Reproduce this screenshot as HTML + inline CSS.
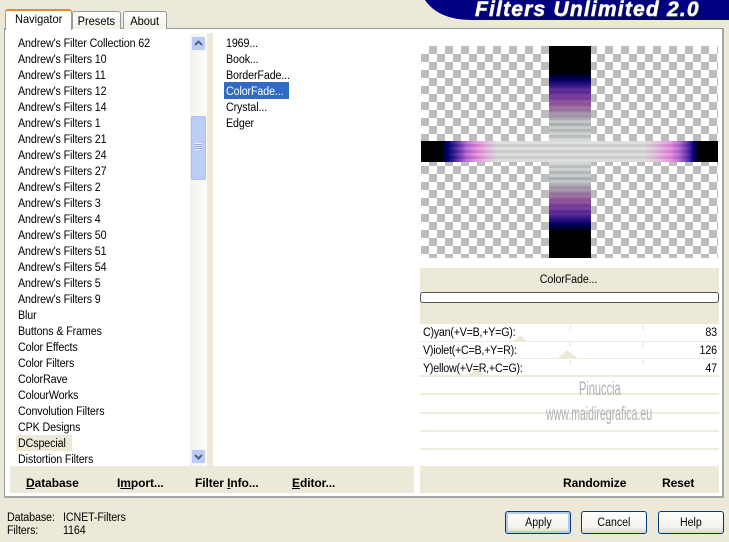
<!DOCTYPE html>
<html><head><meta charset="utf-8"><style>
html,body{margin:0;padding:0}
body{width:729px;height:542px;background:#ece9d8;overflow:hidden;position:relative;font-family:"Liberation Sans",sans-serif;font-size:12px;color:#000}
.a{position:absolute}
.t{position:absolute;white-space:nowrap;line-height:16px;font-size:11.5px;letter-spacing:-.12px;transform:scaleX(.93);transform-origin:0 0}
.b{font-weight:bold;font-size:12px;letter-spacing:-.08px;transform:none}
.c{transform-origin:50% 0}
.r{transform-origin:100% 0}
.btn{position:absolute;top:511px;width:66px;height:23px;box-sizing:border-box;border:1px solid #003c74;border-radius:3px;background:linear-gradient(#fff,#f4f3ee 70%,#dcd8c8);text-align:center;line-height:22px;font-size:11.5px}
.btn span,.tab span{display:inline-block;transform:scaleX(.92)}
.tab{position:absolute;box-sizing:border-box;border:1px solid #919b9c;border-bottom:0;border-radius:3px 3px 0 0;background:linear-gradient(#fff,#f3f1e6);text-align:center;font-size:12px}
.line{position:absolute;left:420px;width:299px;height:2px;background:#efebdd}
</style></head><body>
<!-- header -->
<svg class="a" style="left:420px;top:0" width="309" height="22"><path d="M5 0H309V20H52C28 20 13 12 5 0Z" fill="#000080"/></svg>
<div class="a" style="left:475px;top:-2px;font:italic bold 21px/24px 'Liberation Sans',sans-serif;color:#fff;letter-spacing:1.2px;white-space:nowrap;-webkit-text-stroke:.5px #fff;text-shadow:1px 1px 0 #223">Filters Unlimited 2.0</div>
<!-- page -->
<div class="a" style="left:4px;top:28px;width:720px;height:470px;box-sizing:border-box;background:#fff;border:1px solid #919b9c;border-right:2px solid #a5a9a5;border-bottom:2px solid #a5a9a5"></div>
<!-- tabs -->
<div class="tab" style="left:72px;top:11px;width:49px;height:18px;line-height:18px"><span>Presets</span></div>
<div class="tab" style="left:123px;top:11px;width:44px;height:18px;line-height:18px"><span>About</span></div>
<div class="tab" style="left:5px;top:9px;width:67px;height:21px;background:#fff;border-top:2px solid #e68b2c;border-bottom:0;line-height:17px"><span>Navigator</span></div>
<!-- left columns -->
<div class="a" style="left:207px;top:33px;width:6px;height:433px;background:#ece9d8"></div>
<div class="a" style="left:190px;top:34px;width:17px;height:432px;background:linear-gradient(90deg,#f3f1ea,#fdfdfa)"></div>
<div class="a" style="left:191px;top:36px;width:15px;height:15px;box-sizing:border-box;border:1px solid #eef3ff;border-radius:2px;background:#bcccf5"></div>
<svg class="a" style="left:191px;top:36px" width="15" height="15"><path d="M4 9 L7.5 5.5 L11 9" fill="none" stroke="#4d6185" stroke-width="2"/></svg>
<div class="a" style="left:191px;top:116px;width:15px;height:64px;box-sizing:border-box;border:1px solid #a9bcf0;border-radius:2px;background:#bccdf8"></div>
<div class="a" style="left:195px;top:143px;width:7px;height:7px;background:repeating-linear-gradient(#eef3ff 0 1px,#8ea4e8 1px 2px)"></div>
<div class="a" style="left:191px;top:449px;width:15px;height:15px;box-sizing:border-box;border:1px solid #eef3ff;border-radius:2px;background:#bcccf5"></div>
<svg class="a" style="left:191px;top:449px" width="15" height="15"><path d="M4 6 L7.5 9.5 L11 6" fill="none" stroke="#4d6185" stroke-width="2"/></svg>
<div class="a" style="left:16px;top:435px;width:56px;height:16px;background:#ece9d8"></div>
<div class="a" style="left:224px;top:82px;width:65px;height:17px;background:#316ac5"></div>
<!-- left list -->
<div class="t" style="left:18px;top:36px">Andrew's Filter Collection 62<br>Andrew's Filters 10<br>Andrew's Filters 11<br>Andrew's Filters 12<br>Andrew's Filters 14<br>Andrew's Filters 1<br>Andrew's Filters 21<br>Andrew's Filters 24<br>Andrew's Filters 27<br>Andrew's Filters 2<br>Andrew's Filters 3<br>Andrew's Filters 4<br>Andrew's Filters 50<br>Andrew's Filters 51<br>Andrew's Filters 54<br>Andrew's Filters 5<br>Andrew's Filters 9<br>Blur<br>Buttons &amp; Frames<br>Color Effects<br>Color Filters<br>ColorRave<br>ColourWorks<br>Convolution Filters<br>CPK Designs<br>DCspecial<br>Distortion Filters</div>
<div class="t" style="left:226px;top:36px">1969...<br>Book...<br>BorderFade...<br><span style="color:#fff">ColorFade...</span><br>Crystal...<br>Edger</div>
<!-- preview -->
<div class="a" style="left:421px;top:46px;width:297px;height:212px;background:conic-gradient(#bdbdbd 25%,#fff 0 50%,#bdbdbd 0 75%,#fff 0) 0 0/16px 16px"></div>
<div class="a" style="left:549px;top:46px;width:42px;height:212px;background:linear-gradient(#000 0 26px,#000060 34px,#4a2090 42px,#7c3a9c 52px,#98609f 60px,#a090a8 68px,#b0b6b8 76px,#c8cccc 95px,#c8cccc 117px,#b0b6b8 136px,#a090a8 144px,#98609f 152px,#7c3a9c 160px,#4a2090 170px,#000060 178px,#000 186px)"></div>
<div class="a" style="left:549px;top:88px;width:42px;height:32px;background:repeating-linear-gradient(rgba(255,255,255,.05) 0 3px,rgba(0,0,0,.04) 3px 6px)"></div>
<div class="a" style="left:549px;top:120px;width:42px;height:63px;background:repeating-linear-gradient(rgba(255,255,255,.22) 0 3px,rgba(0,0,0,.05) 3px 6px)"></div>
<div class="a" style="left:549px;top:183px;width:42px;height:32px;background:repeating-linear-gradient(rgba(255,255,255,.05) 0 3px,rgba(0,0,0,.04) 3px 6px)"></div>
<div class="a" style="left:421px;top:141px;width:297px;height:21px;background:linear-gradient(90deg,#000 0 20px,#000070 27px,#5828a8 37px,#b060d0 46px,#e080d8 56px,#e0b0d8 66px,#d6d6d6 76px,#d6d6d6 224px,#e0b0d8 236px,#e080d8 250px,#b060d0 258px,#5828a8 267px,#000070 273px,#000 278px)"></div>
<div class="a" style="left:445px;top:141px;width:250px;height:21px;background:repeating-linear-gradient(rgba(255,255,255,.2) 0 3px,rgba(0,0,0,.04) 3px 6px);-webkit-mask-image:linear-gradient(90deg,transparent,#000 30px,#000 220px,transparent);mask-image:linear-gradient(90deg,transparent,#000 30px,#000 220px,transparent)"></div>
<!-- colorfade band -->
<div class="a" style="left:420px;top:268px;width:299px;height:56px;background:#ece9d8"></div>
<div class="t c" style="left:419px;top:272px;width:299px;text-align:center">ColorFade...</div>
<div class="a" style="left:420px;top:292px;width:299px;height:11px;box-sizing:border-box;border:1px solid #555;border-radius:3px;background:#fff"></div>
<!-- sliders -->
<div class="line" style="top:341px;height:1px"></div>
<div class="line" style="top:358px;height:1px"></div>
<div class="line" style="top:375px"></div>
<div class="line" style="top:393px"></div>
<div class="line" style="top:412px"></div>
<div class="line" style="top:430px"></div>
<div class="line" style="top:448px"></div>
<svg class="a" style="left:420px;top:324px" width="299" height="52">
<path d="M93 18 L100 11 L108 18Z M138 34 L147 26 L157 34Z M47 52 L56 45 L65 52Z" fill="#ece9d8"/>
<path d="M150 1V6M223 1V6M150 18V23M223 18V23M150 36V41M223 36V41" stroke="#e4e2d6"/>
</svg>
<div class="t" style="left:423px;top:325px;letter-spacing:-.25px">C)yan(+V=B,+Y=G):</div>
<div class="t" style="left:423px;top:343px;letter-spacing:-.25px">V)iolet(+C=B,+Y=R):</div>
<div class="t" style="left:423px;top:361px;letter-spacing:-.25px">Y)ellow(+V=R,+C=G):</div>
<div class="t r" style="left:680px;top:325px;width:37px;text-align:right">83</div>
<div class="t r" style="left:680px;top:343px;width:37px;text-align:right">126</div>
<div class="t r" style="left:680px;top:361px;width:37px;text-align:right">47</div>
<!-- watermark -->
<div class="a" style="left:579px;top:379px;font-size:19px;line-height:22px;color:#b0b0b0;white-space:nowrap;transform:scaleX(.58);transform-origin:0 0">Pinuccia</div>
<div class="a" style="left:546px;top:404px;font-size:19px;line-height:22px;color:#b0b0b0;white-space:nowrap;transform:scaleX(.555);transform-origin:0 0">www.maidiregrafica.eu</div>
<!-- bottom bands -->
<div class="a" style="left:10px;top:466px;width:404px;height:27px;background:#ece9d8"></div>
<div class="a" style="left:420px;top:466px;width:299px;height:27px;background:#ece9d8"></div>
<div class="t b" style="left:26px;top:475px"><u>D</u>atabase</div>
<div class="t b" style="left:117px;top:475px">I<u>m</u>port...</div>
<div class="t b" style="left:195px;top:475px">Filter <u>I</u>nfo...</div>
<div class="t b" style="left:292px;top:475px"><u>E</u>ditor...</div>
<div class="t b" style="left:563px;top:475px">Randomize</div>
<div class="t b" style="left:662px;top:475px">Reset</div>
<!-- status -->
<div class="t" style="left:7px;top:510px">Database:</div>
<div class="t" style="left:63px;top:510px">ICNET-Filters</div>
<div class="t" style="left:7px;top:523px">Filters:</div>
<div class="t" style="left:63px;top:523px">1164</div>
<!-- buttons -->
<div class="btn" style="left:505px;box-shadow:inset 0 0 0 2px #b5cbec"><span>Apply</span></div>
<div class="btn" style="left:581px"><span>Cancel</span></div>
<div class="btn" style="left:658px"><span>Help</span></div>
</body></html>
